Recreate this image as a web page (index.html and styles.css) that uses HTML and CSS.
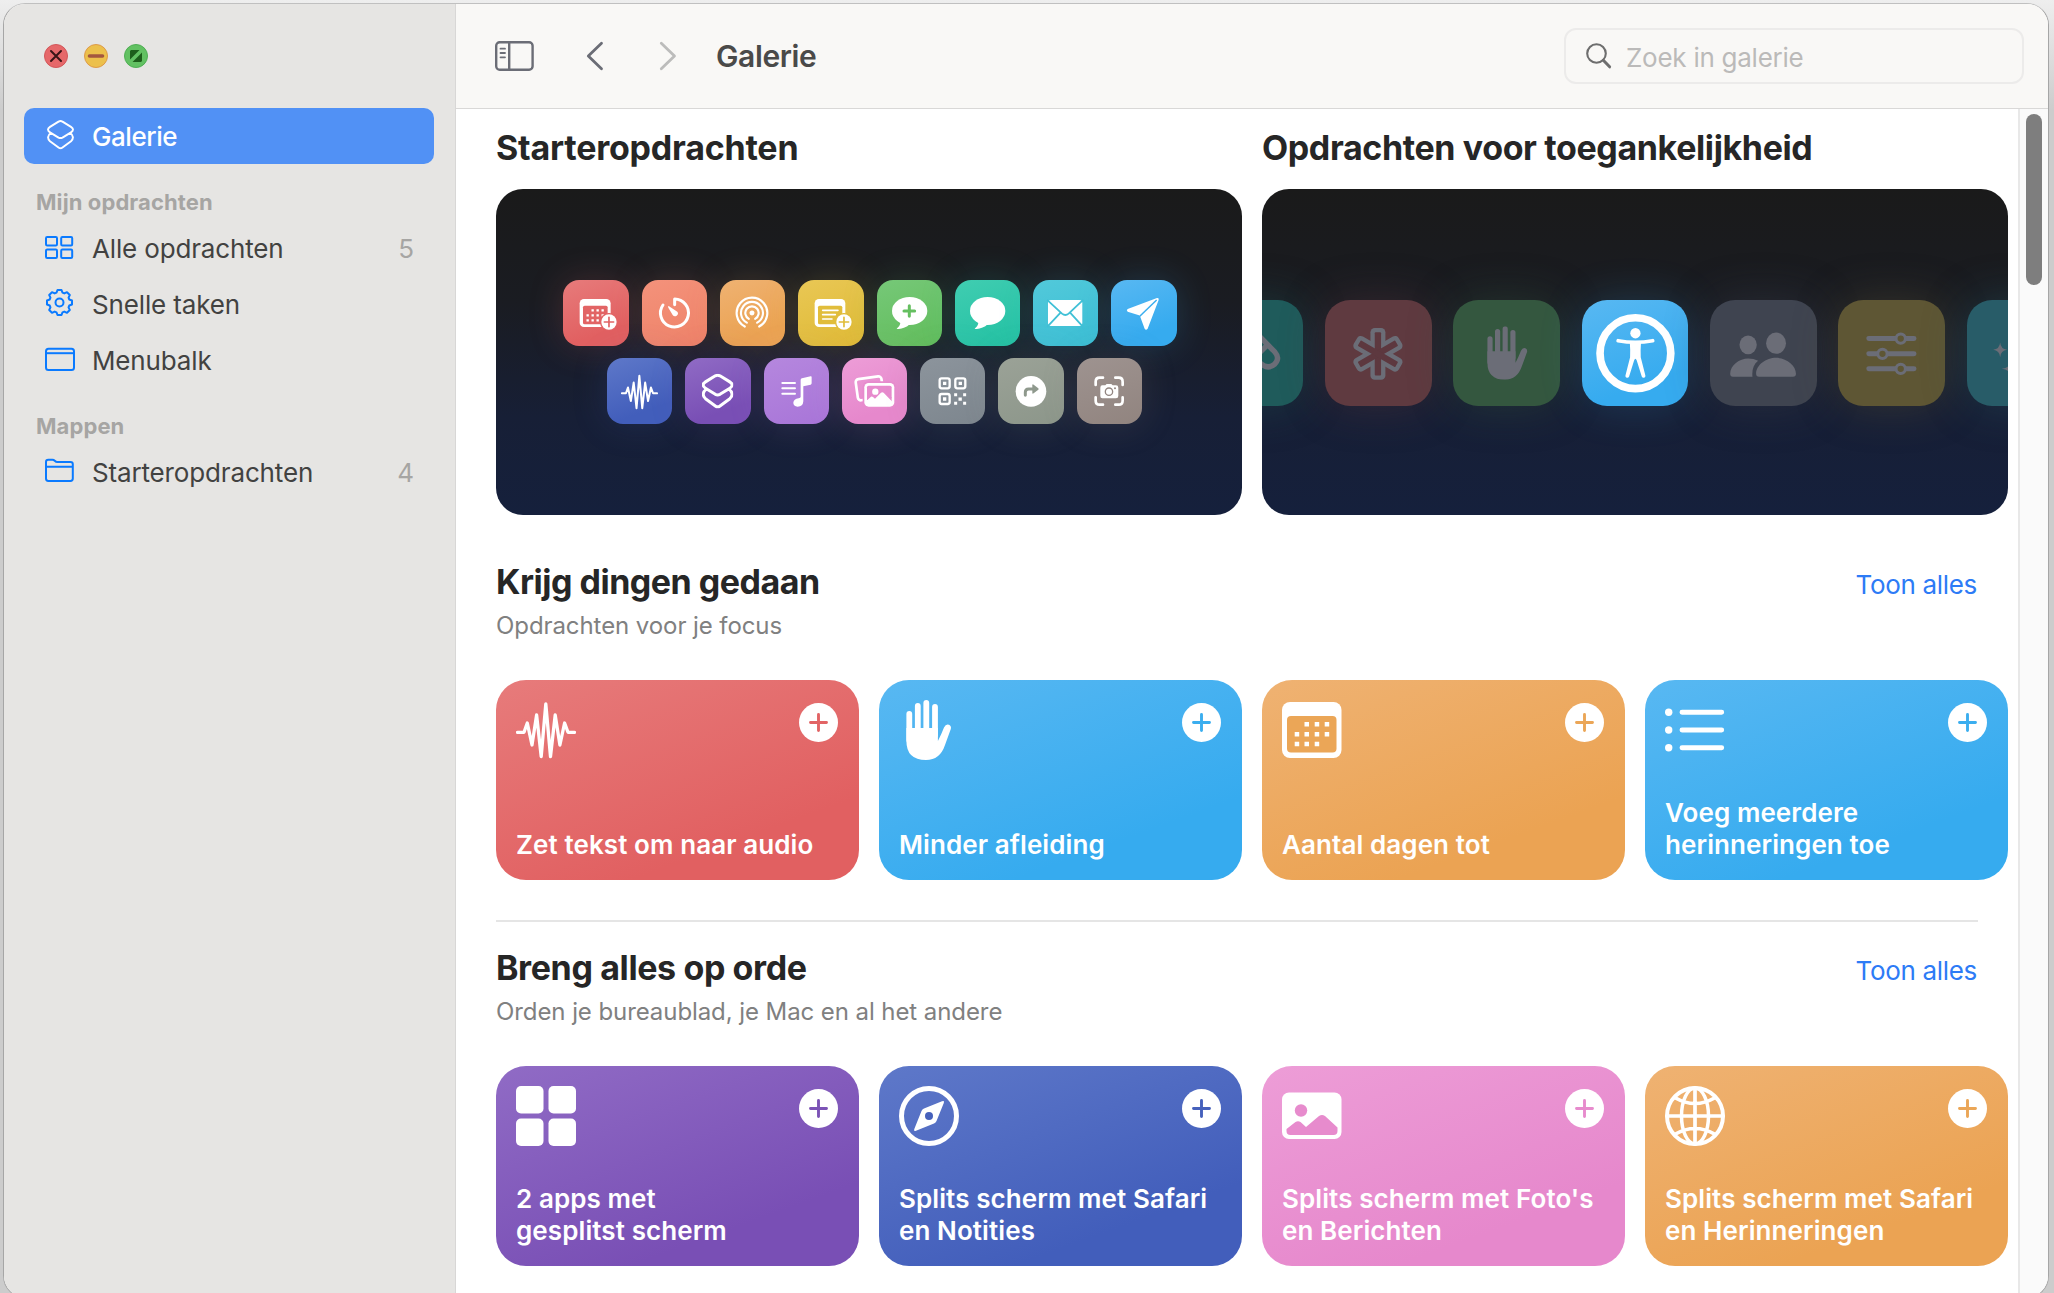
FILE: index.html
```
<!DOCTYPE html>
<html lang="nl">
<head>
    <meta charset="utf-8">
    <title>Galerie</title>
    <link rel="stylesheet" href="styles.css">
</head>
<body>
<!-- icons that are used more than once -->
<svg class="sprite" width="0" height="0">
    <symbol id="wave" viewBox="0 0 60 60">
        <path d="M1.5 32.3H8L11.3 23L16 45L20.6 15L25.2 56.5L29.8 4L34.5 56.5L39.2 15L43.9 45L48.6 23L52 32.3H58.5" fill="none" stroke="#fff" stroke-width="3.3" stroke-linecap="round" stroke-linejoin="round"/>
    </symbol>
    <symbol id="hand" viewBox="0 0 60 60">
        <path d="M10.3 14V40M18.8 6V35M27.3 3V35M36 7V35" fill="none" stroke="currentColor" stroke-width="5.8" stroke-linecap="round"/>
        <path d="M7.4 28H38.9V41Q42.5 34 45 27.5Q47 23.5 50 24.8Q52.6 26 51.8 29L46 45Q41 60 27 60Q7.4 60 7.4 41Z" fill="currentColor"/>
    </symbol>
    <symbol id="stack" viewBox="0 0 54 60">
        <path d="M23 3.5Q27 1.5 31 3.5L48 14Q52 16.5 52 19.5Q52 22.5 48 25L31 35.5Q27 37.5 23 35.5L6 25Q2 22.5 2 19.5Q2 16.5 6 14ZM7.5 26.5C1 31 0.5 38.5 6 43L23 55.5Q27 58.5 31 55.5L48 43C53.5 38.5 53 31 46.5 26.5" fill="none" stroke="#fff" stroke-linejoin="round" stroke-linecap="round"/>
    </symbol>
    <symbol id="plus" viewBox="0 0 39 39">
        <circle cx="19.5" cy="19.5" r="19.5" fill="#fff"/>
        <path d="M19.5 11.5V27.5M11.5 19.5H27.5" stroke="currentColor" stroke-width="2.9" stroke-linecap="round"/>
    </symbol>
    <symbol id="badge" viewBox="0 0 54 54">
        <circle cx="27" cy="27" r="27" fill="currentColor"/>
        <circle cx="27" cy="27" r="23" fill="#fff"/>
        <path d="M27 13V41M13 27H41" stroke="currentColor" stroke-width="5" stroke-linecap="round"/>
    </symbol>
</svg>

<div class="window">
    <aside class="sidebar">
        <div class="lights">
            <svg viewBox="0 0 24 24"><circle cx="12" cy="12" r="11.5" fill="#e6686a" stroke="#d2575a"/><path d="M7 7L17 17M17 7L7 17" stroke="#3b1517" stroke-width="2" stroke-linecap="round"/></svg>
            <svg viewBox="0 0 24 24"><circle cx="12" cy="12" r="11.5" fill="#ecc04c" stroke="#dd9a4a"/><path d="M5.5 12H18.5" stroke="#a4573f" stroke-width="3.6" stroke-linecap="round"/></svg>
            <svg viewBox="0 0 24 24"><circle cx="12" cy="12" r="11.5" fill="#62c162" stroke="#4fae54"/><path d="M7 6H15.5L6 15.5V7ZM17 18H8.5L18 8.5V17Z" fill="#1d5f1b"/></svg>
        </div>
        <ul>
            <li class="item selected">
                <svg viewBox="0 0 32 32"><use href="#stack" x="3" y="-0.2" width="27" height="30"/></svg>
                <span>Galerie</span>
            </li>
        </ul>
        <h4>Mijn opdrachten</h4>
        <ul>
            <li class="item">
                <svg viewBox="0 0 32 32"><rect x="2" y="5" width="11" height="8.5" rx="1.2"/><rect x="17.2" y="5" width="11" height="8.5" rx="1.2"/><rect x="2" y="17.5" width="11" height="8.5" rx="1.2"/><rect x="17.2" y="17.5" width="11" height="8.5" rx="1.2"/></svg>
                <span>Alle opdrachten</span><em>5</em>
            </li>
            <li class="item">
                <svg viewBox="0 0 32 32"><g transform="translate(15.5 14.5)"><path d="M-2 -12.5L2 -12.5L3 -9.8L4.8 -9.05L7.5 -10.3L10.3 -7.5L9.05 -4.8L9.8 -3L12.5 -2L12.5 2L9.8 3L9.05 4.8L10.3 7.5L7.5 10.3L4.8 9.05L3 9.8L2 12.5L-2 12.5L-3 9.8L-4.8 9.05L-7.5 10.3L-10.3 7.5L-9.05 4.8L-9.8 3L-12.5 2L-12.5 -2L-9.8 -3L-9.05 -4.8L-10.3 -7.5L-7.5 -10.3L-4.8 -9.05L-3 -9.8Z"/><circle r="4"/></g></svg>
                <span>Snelle taken</span>
            </li>
            <li class="item">
                <svg viewBox="0 0 32 32"><rect x="2" y="4.7" width="28" height="21.3" rx="2.5"/><path d="M2 9.2H30"/></svg>
                <span>Menubalk</span>
            </li>
        </ul>
        <h4>Mappen</h4>
        <ul>
            <li class="item">
                <svg viewBox="0 0 32 32"><path d="M2 10.8H29M2 22.5V6Q2 3.7 4.3 3.7H8.5Q9.7 3.7 10.7 4.7Q12 6 13.3 6H26.5Q28.8 6 28.8 8.3V22.5Q28.8 24.9 26.5 24.9H4.3Q2 24.9 2 22.5Z"/></svg>
                <span>Starteropdrachten</span><em>4</em>
            </li>
        </ul>
    </aside>

    <main>
        <header class="toolbar">
            <svg class="toggle" viewBox="0 0 39 30"><rect x="1.2" y="1.2" width="36.4" height="27.6" rx="3.5"/><path d="M14.2 1.5V28.5"/><path class="thin" d="M5.5 7.7H10M5.5 12H10M5.5 16.3H10"/></svg>
            <svg class="back" viewBox="0 0 18 30"><path d="M15.5 2.3L2.3 15L15.5 27.7"/></svg>
            <svg class="forward" viewBox="0 0 18 30"><path d="M2.3 2.3L15.5 15L2.3 27.7"/></svg>
            <h1>Galerie</h1>
            <div class="search">
                <svg viewBox="0 0 26 26"><circle cx="10.5" cy="10.5" r="9.3"/><path d="M17.3 17.3L23.6 23.8" stroke-width="3"/></svg>
                <span>Zoek in galerie</span>
            </div>
        </header>

        <div class="scroller">
        <div class="content">
            <div class="heroes">
                <div class="hero">
                    <h2 class="wide">Starteropdrachten</h2>
                    <div class="banner">
                        <div class="row first">
                            <div class="tile red"><svg viewBox="0 0 196 196"><rect x="50" y="57" width="93" height="84" rx="13"/><rect x="60" y="77" width="74" height="56" rx="5" class="cut"/><path d="M85.5 87.5h7v7h-7zM100.5 87.5h7v7h-7zM115.5 87.5h7v7h-7zM70.5 102.5h7v7h-7zM85.5 102.5h7v7h-7zM100.5 102.5h7v7h-7zM115.5 102.5h7v7h-7zM70.5 117.5h7v7h-7zM85.5 117.5h7v7h-7zM100.5 117.5h7v7h-7z"/><use href="#badge" x="111" y="99" width="54" height="54"/></svg></div>
                            <div class="tile salmon"><svg viewBox="0 0 196 196"><path class="line" stroke-width="9" d="M98 74V57A42 42 0 1 1 63 75"/><path d="M80 78Q77 79 79 83L92 105A8.5 8.5 0 0 0 106 95Z"/></svg></div>
                            <div class="tile orange"><svg viewBox="0 0 196 196"><path class="line" stroke-width="6.5" d="M74.4 139.6A46 46 0 1 1 117.6 139.6M80.5 128A33 33 0 1 1 111.500 128M86.6 116.6A20 20 0 1 1 105.4 116.6"/><circle cx="96" cy="99" r="7.5"/></svg></div>
                            <div class="tile yellow"><svg viewBox="0 0 196 196"><rect x="50" y="57" width="92" height="84" rx="13"/><rect x="60" y="77" width="73" height="56" rx="5" class="cut"/><path class="line" stroke-width="5" d="M74 91H120M74 104H112M74 117H102"/><use href="#badge" x="111" y="99" width="54" height="54"/></svg></div>
                            <div class="tile green"><svg viewBox="0 0 196 196"><ellipse cx="98" cy="93" rx="53" ry="42"/><path d="M70 124C71 136 64 142 59 146C70 149 88 143 98 133Z"/><path class="line cutline" stroke-width="9" d="M97 77V109M81 93H113"/></svg></div>
                            <div class="tile teal"><svg viewBox="0 0 196 196"><ellipse cx="98" cy="93" rx="53" ry="42"/><path d="M70 124C71 136 64 142 59 146C70 149 88 143 98 133Z"/></svg></div>
                            <div class="tile cyan"><svg viewBox="0 0 196 196"><rect x="45" y="60" width="103" height="78" rx="9"/><path class="line cutline" stroke-width="5.5" d="M44 61L87 101Q97 109 107 101L149 61M44 139L82 99M149 139L112 99"/></svg></div>
                            <div class="tile blue"><svg viewBox="0 0 196 196"><path d="M138 54Q145 53 143 60L110 146Q105 152 101 146L88 111L84 106L50 95Q45 91 50 87Z"/><path class="cutline" stroke-width="4.5" d="M84 111L137 60"/></svg></div>
                        </div>
                        <div class="row second">
                            <div class="tile indigo"><svg viewBox="0 0 196 196"><use href="#wave" x="42" y="46" width="111" height="111"/></svg></div>
                            <div class="tile purple"><svg viewBox="0 0 196 196"><use class="bold" href="#stack" x="51" y="47" width="94" height="105"/></svg></div>
                            <div class="tile lilac"><svg viewBox="0 0 196 196"><path class="line" stroke-width="6" d="M55 75H93M55 91H93M55 107H93"/><path d="M110 66Q110 62 114 61L140 55Q143 54 143 58V76Q143 79 140 80L118 85V130Q117 146 101 146Q88 145 88 134Q89 123 104 121Q110 120 110 116Z"/></svg></div>
                            <div class="tile pink"><svg viewBox="0 0 196 196"><rect x="44" y="59" width="78" height="64" rx="9" class="line" stroke-width="8" transform="rotate(-8 83 91)"/><rect x="62" y="70" width="100" height="81" rx="17" class="cut"/><rect x="67" y="75" width="90" height="71" rx="13"/><rect x="75" y="83" width="74" height="40" rx="5" class="cut"/><path class="cut" d="M75 118H149V132L75 126Z"/><circle cx="100" cy="101" r="9.5"/><path d="M73 129L87 116Q90 114 93 117L99 122L117 104Q121 101 125 104L151 131V140H73Z"/></svg></div>
                            <div class="tile slate"><svg viewBox="0 0 196 196"><g class="line" stroke-width="7"><rect x="59" y="61" width="30" height="30" rx="6"/><rect x="106" y="61" width="30" height="30" rx="6"/><rect x="59" y="108" width="30" height="30" rx="6"/></g><path d="M69 71h10v10h-10zM116 71h10v10h-10zM69 118h10v10h-10zM102.5 105.5h9v9h-9zM129.5 105.5h9v9h-9zM115.5 118.5h10v10h-10zM102.5 131.5h9v9h-9zM129.5 131.5h9v9h-9z"/></svg></div>
                            <div class="tile sage"><svg viewBox="0 0 196 196"><circle cx="99" cy="100" r="46"/><path class="line cutline" stroke-width="9" d="M82 112V103Q82 93 92 93H104"/><path class="cut" d="M103 82Q103 77 107 80L121 91Q123 93 121 95L107 106Q103 109 103 104Z"/></svg></div>
                            <div class="tile taupe"><svg viewBox="0 0 196 196"><path class="line" stroke-width="8" d="M56 81V71Q56 59 68 59H78M115 59H125Q137 59 137 71V81M137 118V128Q137 140 125 140H115M78 140H68Q56 140 56 128V118"/><path d="M76 82H85L89 78H103L107 82H117Q124 82 124 89V114Q124 121 117 121H76Q70 121 70 114V89Q70 82 76 82Z"/><circle cx="96" cy="101" r="11" class="ring"/><circle cx="114" cy="91" r="3" class="cut"/></svg></div>
                        </div>
                    </div>
                </div>
                <div class="hero">
                    <h2>Opdrachten voor toegankelijkheid</h2>
                    <div class="banner large">
                        <div class="row">
                            <div class="tile dim-teal"><svg viewBox="0 0 319 319"><path class="line" stroke-width="16" d="M188 110L234 157Q250 175 233 193Q213 210 192 192L170 170M206 140L170 176"/></svg></div>
                            <div class="tile dim-red"><svg viewBox="0 0 319 319"><rect id="arm" x="136" y="84" width="45" height="156" rx="13"/><use href="#arm" transform="rotate(60 158.5 162)"/><use href="#arm" transform="rotate(120 158.5 162)"/><g class="cut"><rect id="core" x="149" y="97" width="19" height="130" rx="3"/><use href="#core" transform="rotate(60 158.5 162)"/><use href="#core" transform="rotate(120 158.5 162)"/></g></svg></div>
                            <div class="tile dim-green"><svg viewBox="0 0 319 319"><use class="greyed" href="#hand" x="83" y="79" width="161" height="161"/></svg></div>
                            <div class="tile blue lit"><svg viewBox="0 0 319 319"><circle cx="160" cy="160" r="106.5" class="line" stroke-width="23"/><circle cx="160" cy="100" r="15.5"/><path class="line" stroke-width="11" d="M108 122.5Q160 132 212 122.5"/><path d="M143 124H177Q175 150 176 172L190 227Q191 233 186 234Q181 235 179 230L164 182Q160 171 156 182L141 230Q139 235 134 234Q129 233 130 227L144 172Q145 150 143 124Z"/></svg></div>
                            <div class="tile dim-grey"><svg viewBox="0 0 319 319"><ellipse cx="198" cy="130" rx="30" ry="32"/><ellipse cx="114" cy="135" rx="26" ry="28"/><path d="M138 222C138 196 168 174 198 174C228 174 258 196 258 222Q258 231 249 231H147Q138 231 138 222ZM60 222C60 196 88 176 114 176Q131 176 144 183C130 194 125 210 127 231H68Q60 231 60 222Z"/></svg></div>
                            <div class="tile dim-yellow"><svg viewBox="0 0 319 319"><path class="line" stroke-width="15" d="M92 116H228M92 162H228M92 207H228"/><g class="knobs"><circle cx="188" cy="116" r="14"/><circle cx="133" cy="162" r="14"/><circle cx="188" cy="207" r="14"/></g></svg></div>
                            <div class="tile dim-cyan"><svg viewBox="0 0 319 319"><path d="M99 128Q101 148 120 150Q101 152 99 172Q97 152 78 150Q97 148 99 128ZM131 182Q133 205 158 207Q133 209 131 232Q129 209 104 207Q129 205 131 182ZM190 95Q193 135 250 140Q193 145 190 190Q187 145 140 140Q187 135 190 95Z"/></svg></div>
                        </div>
                    </div>
                </div>
            </div>

            <section>
                <div class="section-head">
                    <div>
                        <h2 class="tight">Krijg dingen gedaan</h2>
                        <p>Opdrachten voor je focus</p>
                    </div>
                    <a>Toon alles</a>
                </div>
                <div class="cards">
                    <div class="card red">
                        <div class="card-top"><svg class="icon"><use href="#wave"/></svg><svg class="add"><use href="#plus"/></svg></div>
                        <h3>Zet tekst om naar audio</h3>
                    </div>
                    <div class="card blue">
                        <div class="card-top"><svg class="icon"><use class="white" href="#hand"/></svg><svg class="add"><use href="#plus"/></svg></div>
                        <h3>Minder afleiding</h3>
                    </div>
                    <div class="card orange">
                        <div class="card-top"><svg class="icon" viewBox="0 0 60 60"><rect x="0" y="2" width="59.5" height="56" rx="8"/><rect x="5" y="16" width="49.5" height="36.5" rx="4" class="cut"/><path d="M22.5 22h4.5v4.5h-4.5zM32.7 22h4.5v4.5h-4.5zM42.7 22h4.5v4.5h-4.5zM12.7 32h4.5v4.5h-4.5zM22.5 32h4.5v4.5h-4.5zM32.7 32h4.5v4.5h-4.5zM42.7 32h4.5v4.5h-4.5zM12.7 41.7h4.5v4.5h-4.5zM22.5 41.7h4.5v4.5h-4.5zM32.7 41.7h4.5v4.5h-4.5z"/></svg><svg class="add"><use href="#plus"/></svg></div>
                        <h3>Aantal dagen tot</h3>
                    </div>
                    <div class="card blue">
                        <div class="card-top"><svg class="icon" viewBox="0 0 60 60"><circle cx="3.7" cy="12.3" r="3.7"/><circle cx="3.7" cy="30" r="3.7"/><circle cx="3.7" cy="47.7" r="3.7"/><path class="line" stroke-width="4.9" d="M17 12.3H56.7M17 30H56.7M17 47.7H56.7"/></svg><svg class="add"><use href="#plus"/></svg></div>
                        <h3>Voeg meerdere<br>herinneringen toe</h3>
                    </div>
                </div>
            </section>

            <section class="ruled">
                <div class="section-head">
                    <div>
                        <h2>Breng alles op orde</h2>
                        <p>Orden je bureaublad, je Mac en al het andere</p>
                    </div>
                    <a>Toon alles</a>
                </div>
                <div class="cards">
                    <div class="card purple">
                        <div class="card-top"><svg class="icon" viewBox="0 0 60 60"><rect width="27.5" height="27.5" rx="5"/><rect x="32.5" width="27.5" height="27.5" rx="5"/><rect y="32.5" width="27.5" height="27.5" rx="5"/><rect x="32.5" y="32.5" width="27.5" height="27.5" rx="5"/></svg><svg class="add"><use href="#plus"/></svg></div>
                        <h3>2 apps met<br>gesplitst scherm</h3>
                    </div>
                    <div class="card indigo">
                        <div class="card-top"><svg class="icon" viewBox="0 0 60 60"><circle cx="30" cy="30" r="27.5" class="line" stroke-width="5"/><path d="M43 15.3Q45.8 14.3 44.8 17L37.5 35Q36.8 36.8 35 37.5L17 44.8Q14.3 45.8 15.3 43L22.5 25Q23.2 23.2 25 22.5Z"/><circle cx="30" cy="30" r="4" class="cut"/></svg><svg class="add"><use href="#plus"/></svg></div>
                        <h3>Splits scherm met Safari<br>en Notities</h3>
                    </div>
                    <div class="card pink">
                        <div class="card-top"><svg class="icon" viewBox="0 0 60 60"><rect y="6.5" width="59.5" height="46.5" rx="7"/><circle cx="19" cy="24.5" r="6.2" class="cut"/><path class="cut" d="M4.5 43L13.5 36Q16 34.3 18.5 36L24 41L37 30Q40 28 43 30L55.5 41.5V45Q55.5 49 51.5 49H8.5Q4.5 49 4.5 45Z"/></svg><svg class="add"><use href="#plus"/></svg></div>
                        <h3>Splits scherm met Foto's<br>en Berichten</h3>
                    </div>
                    <div class="card orange">
                        <div class="card-top"><svg class="icon" viewBox="0 0 60 60"><g class="line"><circle cx="30" cy="30" r="28" stroke-width="4"/><ellipse cx="30" cy="30" rx="13.5" ry="28" stroke-width="3.5"/><path stroke-width="3.7" d="M30 2V58M2 30H58M10.5 12Q30 23 49.5 12M10.5 48Q30 37 49.5 48"/></g></svg><svg class="add"><use href="#plus"/></svg></div>
                        <h3>Splits scherm met Safari<br>en Herinneringen</h3>
                    </div>
                </div>
            </section>
        </div>
        <div class="track"><div class="thumb"></div></div>
        </div>
    </main>
</div>
</body>
</html>
```
FILE: styles.css
```
* {
    box-sizing: border-box;
    margin: 0;
    padding: 0;
}
body {
    height: 1293px;
    overflow: hidden;
    padding: 3px 5px 0 3px;
    background: linear-gradient(#eeeeee, #e2e2e2 40px, #cccccc 110px);
    font-family: Inter, "Liberation Sans", sans-serif;
    color: #262626;
}
svg {
    display: block;
    flex: none;
}
.sprite {
    position: absolute;
}
ul {
    list-style: none;
}

.window {
    display: flex;
    height: 1295px;
    border: 1px solid #a6a6a6;
    border-top-color: #c0c0c0;
    border-radius: 22px;
    overflow: hidden;
    background: #fff;
}

/* sidebar */
.sidebar {
    flex: none;
    width: 452px;
    padding: 40px 21px 0 20px;
    background: #e6e5e3;
    border-right: 1px solid #d8d7d6;
}
.lights {
    display: flex;
    gap: 16px;
    margin: 0 0 40px 20px;
}
.lights svg {
    width: 24px;
    height: 24px;
}
.sidebar h4 {
    padding: 20px 0 0 12px;
    font-size: 22px;
    line-height: 36px;
    font-weight: 700;
    letter-spacing: 0.1px;
    color: #a6a5a3;
}
.item {
    display: flex;
    align-items: center;
    height: 56px;
    padding: 0 20px;
    font-size: 26px;
    letter-spacing: -0.15px;
    color: #424241;
}
.item svg {
    width: 32px;
    height: 32px;
    margin-right: 16px;
    overflow: visible;
    fill: none;
    stroke: #0a7aff;
    stroke-width: 2;
    stroke-linejoin: round;
}
.item span {
    flex: 1;
}
.item em {
    font-style: normal;
    color: #a6a5a3;
}
.selected {
    width: 410px;
    border-radius: 10px;
    background: #5191f5;
    color: #fff;
    font-weight: 500;
    letter-spacing: -0.45px;
}
.selected use {
    stroke-width: 3.9;
}

/* toolbar */
main {
    flex: 1;
    display: flex;
    flex-direction: column;
    min-width: 0;
}
.toolbar {
    flex: none;
    display: flex;
    align-items: center;
    height: 105px;
    padding: 0 24px 1px 39px;
    background: #f9f8f6;
    border-bottom: 1px solid #d9d8d7;
}
.toolbar svg {
    fill: none;
    stroke: #6b6d76;
    stroke-width: 2.4;
    stroke-linecap: round;
    stroke-linejoin: round;
}
.toolbar .toggle {
    width: 39px;
    height: 30px;
}
.toolbar .thin {
    stroke-width: 1.8;
}
.toolbar .back, .toolbar .forward {
    width: 18px;
    height: 30px;
    stroke-width: 2.8;
}
.toolbar .back {
    margin-left: 52px;
}
.toolbar .forward {
    margin-left: 55px;
    stroke: #bcbcbb;
}
h1 {
    margin-left: 39px;
    font-size: 30px;
    line-height: 40px;
    font-weight: 600;
    letter-spacing: -0.39px;
    color: #4a4a49;
}
.search {
    display: flex;
    align-items: center;
    width: 460px;
    height: 56px;
    margin-left: auto;
    padding: 4px 20px 0;
    border: 2px solid #ecebea;
    border-radius: 12px;
    font-size: 26px;
    letter-spacing: -0.26px;
    color: #bbbab9;
}
.search svg {
    width: 26px;
    height: 26px;
    margin: -4px 14px 0 0;
    stroke: #6e6e6e;
    stroke-width: 2.1;
}

/* gallery */
.scroller {
    flex: 1;
    display: flex;
    min-height: 0;
}
.content {
    flex: 1;
    padding: 19px 10px 0 40px;
}
.track {
    width: 30px;
    padding: 5px 0 0 6px;
    background: #fafafa;
    border-left: 2px solid #e8e8e8;
}
.thumb {
    width: 16px;
    height: 171px;
    border-radius: 8px;
    background: #7e7e7e;
}
h2 {
    font-size: 34px;
    line-height: 40px;
    font-weight: 700;
    letter-spacing: -0.38px;
    white-space: nowrap;
}
h2.wide {
    letter-spacing: -0.22px;
}
h2.tight {
    letter-spacing: -0.5px;
}
.heroes {
    display: flex;
    gap: 20px;
    margin-bottom: 47px;
}
.hero {
    width: 746px;
}
.banner {
    display: flex;
    flex-direction: column;
    justify-content: center;
    align-items: center;
    gap: 12.7px;
    height: 326px;
    margin-top: 21px;
    border-radius: 27px;
    overflow: hidden;
    background: linear-gradient(#1a1a1a, #1a1c22 35%, #171f36 70%, #15203c);
}
.row {
    display: flex;
    gap: 13px;
}
.row.first {
    padding-left: 2px;
}
.row.second {
    padding-left: 11px;
}
.tile {
    flex: none;
    width: 65.3px;
    height: 65.3px;
    border-radius: 16px;
    fill: #fff;
    box-shadow: 0 0 36px color-mix(in srgb, currentColor 20%, transparent);
}
.tile svg {
    width: 100%;
    height: 100%;
}
.large {
    padding-top: 2px;
}
.large .row {
    gap: 21.8px;
}
.large .tile {
    width: 106.5px;
    height: 106px;
    border-radius: 25px;
    box-shadow: 0 0 44px color-mix(in srgb, currentColor 40%, transparent);
}
.large .lit {
    box-shadow: 0 0 44px color-mix(in srgb, currentColor 20%, transparent);
}
.bold {
    stroke-width: 5.2;
}
.cut {
    fill: currentColor;
}
.line {
    fill: none;
    stroke: #fff;
    stroke-linecap: round;
    stroke-linejoin: round;
}
.cutline {
    fill: none;
    stroke: currentColor;
}
.ring {
    stroke: currentColor;
    stroke-width: 4;
}
.white {
    color: #fff;
}

/* color is the tint that cut-outs and glow take over */
.red { color: #e26465; background: linear-gradient(160deg, #e77b7b, #e16061 75%); }
.salmon { color: #ef8569; background: linear-gradient(160deg, #f4927b, #ee8268); }
.orange { color: #eba657; background: linear-gradient(160deg, #efb272, #eba353 75%); }
.yellow { color: #e1bd3b; background: linear-gradient(160deg, #e9c755, #dfba35); }
.green { color: #65bf60; background: linear-gradient(160deg, #76c878, #61bd5b); }
.teal { color: #28c3a6; background: linear-gradient(160deg, #40cdb1, #23c1a3); }
.cyan { color: #40c0d6; background: linear-gradient(160deg, #52c9da, #3bbed4); }
.blue { color: #3baeef; background: linear-gradient(160deg, #58b8f2, #36abef 75%); }
.indigo { color: #4661bc; background: linear-gradient(160deg, #5e78c9, #425ebb 75%); }
.purple { color: #7c53b6; background: linear-gradient(160deg, #906bc5, #794fb5 75%); }
.lilac { color: #aa78d9; background: linear-gradient(160deg, #b587de, #a875d8); }
.pink { color: #e78bcd; background: linear-gradient(160deg, #ed9dd7, #e688cc 75%); }
.slate { color: #7f8890; background: linear-gradient(160deg, #8c949c, #7d868e); }
.sage { color: #8f998d; background: linear-gradient(160deg, #9ba297, #8c968a); }
.taupe { color: #938682; background: linear-gradient(160deg, #9e9390, #91847f); }

.dim-teal { color: #1f5b5b; background: #1f5b5b; }
.dim-red { color: #5d383f; background: #5f3a40; }
.dim-green { color: #34573f; background: #34573f; }
.dim-grey { color: #3e4350; background: #3f4450; }
.dim-yellow { color: #5e5634; background: #5e5634; }
.dim-cyan { color: #285c68; background: #285c68; }
[class*="dim-"] {
    fill: #6b6d77;
}
[class*="dim-"] .line {
    stroke: #6b6d77;
}
.greyed {
    color: #6b6d77;
}
.knobs {
    fill: currentColor;
    stroke: #6b6d77;
    stroke-width: 9;
}

.section-head {
    display: flex;
    justify-content: space-between;
    height: 118px;
    margin-right: 30px;
}
.section-head p {
    margin-top: 9px;
    font-size: 24px;
    line-height: 30px;
    letter-spacing: -0.08px;
    color: #808080;
}
.section-head a {
    padding: 3px 1px 0 0;
    font-size: 26px;
    line-height: 40px;
    letter-spacing: -0.33px;
    color: #2d7bf6;
}
.ruled {
    margin-top: 40px;
}
.ruled::before {
    content: "";
    display: block;
    height: 2px;
    margin: 0 30px 26px 0;
    background: #e5e5e5;
}
.cards {
    display: flex;
    gap: 20px;
}
.card {
    display: flex;
    flex-direction: column;
    justify-content: space-between;
    width: 363px;
    height: 200px;
    padding: 20px 20px 19px;
    border-radius: 30px;
}
.card-top {
    display: flex;
    justify-content: space-between;
}
.icon {
    width: 60px;
    height: 60px;
    fill: #fff;
}
.add {
    width: 39px;
    height: 39px;
    margin: 3px 1px 0 0;
}
.card h3 {
    font-size: 26px;
    line-height: 32px;
    font-weight: 600;
    letter-spacing: 0.09px;
    color: #fff;
    white-space: nowrap;
}
```
